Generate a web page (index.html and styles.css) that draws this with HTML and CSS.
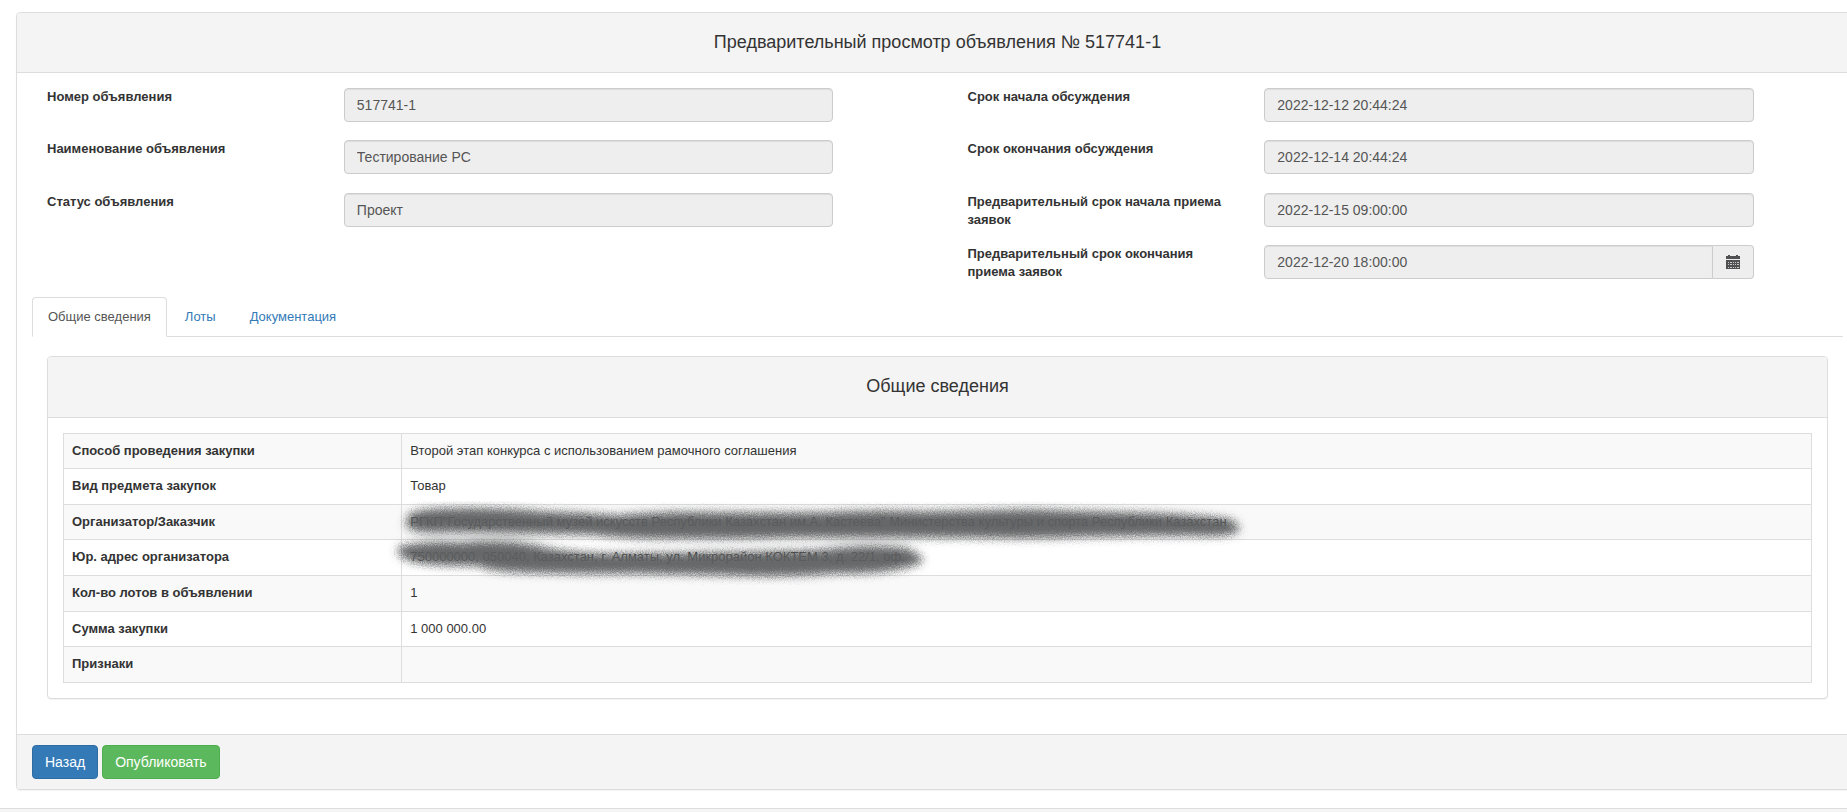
FILE: index.html
```html
<!DOCTYPE html>
<html lang="ru">
<head>
<meta charset="utf-8">
<title>Предварительный просмотр объявления № 517741-1</title>
<link rel="stylesheet" href="styles.css">
</head>
<body>
<main class="page">
  <section class="panel">
    <header class="panel-heading"><h1 class="panel-title">Предварительный просмотр объявления № 517741-1</h1></header>
    <form class="details">
      <div class="details-column">
        <div class="field"><label class="field-label" for="number">Номер объявления</label><div class="field-control"><input class="input" id="number" type="text" value="517741-1" readonly></div></div>
        <div class="field"><label class="field-label" for="name">Наименование объявления</label><div class="field-control"><input class="input" id="name" type="text" value="Тестирование РС" readonly></div></div>
        <div class="field"><label class="field-label" for="status">Статус объявления</label><div class="field-control"><input class="input" id="status" type="text" value="Проект" readonly></div></div>
      </div>
      <div class="details-column">
        <div class="field"><label class="field-label" for="discuss-start">Срок начала обсуждения</label><div class="field-control"><input class="input" id="discuss-start" type="text" value="2022-12-12 20:44:24" readonly></div></div>
        <div class="field"><label class="field-label" for="discuss-end">Срок окончания обсуждения</label><div class="field-control"><input class="input" id="discuss-end" type="text" value="2022-12-14 20:44:24" readonly></div></div>
        <div class="field"><label class="field-label" for="bids-start">Предварительный срок начала приема заявок</label><div class="field-control"><input class="input" id="bids-start" type="text" value="2022-12-15 09:00:00" readonly></div></div>
        <div class="field"><label class="field-label" for="bids-end">Предварительный срок окончания приема заявок</label>
          <div class="field-control">
            <input class="input input-joined" id="bids-end" type="text" value="2022-12-20 18:00:00" readonly>
            <button class="addon" type="button" aria-label="Выбрать дату">
              <svg width="14" height="14" viewBox="0 0 14 14" shape-rendering="crispEdges" aria-hidden="true">
                <path fill="#505052" d="M2 0h2v1h6V0h2v1h2v3H0V1h2zM0 5h14v9H0z"/>
                <path fill="#c8c8c8" d="M2 7h1v1H2zM4 7h2v1H4zM7 7h1v1H7zM9 7h1v1H9zM11 7h2v1h-2zM2 9h1v1H2zM4 9h2v1H4zM7 9h1v1H7zM9 9h1v1H9zM11 9h2v1h-2zM2 12h1v1H2zM4 12h2v1H4zM7 12h1v1H7zM9 12h1v1H9zM11 12h2v1h-2z"/>
              </svg>
            </button>
          </div>
        </div>
      </div>
    </form>
    <div class="panel-content">
      <nav class="tabs">
        <a class="tab tab-active" href="#general">Общие сведения</a>
        <a class="tab" href="#lots">Лоты</a>
        <a class="tab" href="#docs">Документация</a>
      </nav>
      <section class="panel panel-inner" id="general">
        <header class="panel-heading"><h2 class="panel-title">Общие сведения</h2></header>
        <div class="panel-body">
          <table class="table">
            <tbody>
              <tr><th scope="row">Способ проведения закупки</th><td>Второй этап конкурса с использованием рамочного соглашения</td></tr>
              <tr><th scope="row">Вид предмета закупок</th><td>Товар</td></tr>
              <tr><th scope="row">Организатор/Заказчик</th><td class="redacted">РГКП"Государственный музей искусств Республики Казахстан им.А. Кастеева" Министерства культуры и спорта Республики Казахстан
                <svg class="brush" width="880" height="84" viewBox="0 0 880 84" aria-hidden="true">
                  <defs>
                    <filter id="spray" x="0" y="0" width="880" height="84" filterUnits="userSpaceOnUse">
                      <feGaussianBlur stdDeviation="5 4" result="soft"/>
                      <feTurbulence type="fractalNoise" baseFrequency="0.9" numOctaves="2" seed="4" result="noise"/>
                      <feDisplacementMap in="soft" in2="noise" scale="8" xChannelSelector="R" yChannelSelector="G"/>
                    </filter>
                  </defs>
                  <g filter="url(#spray)" fill="#5c5e60" fill-opacity="0.94" stroke="#5c5e60" stroke-opacity="0.5" stroke-width="2">
                    <path d="M22 13Q34 8 64 8Q114 7 154 11Q194 12 229 15Q274 10 334 12L434 12Q484 9 534 11L644 9Q694 11 744 12Q794 13 839 18Q856 24 848 31Q839 36 804 34L704 35Q644 38 584 36L404 36Q344 38 294 37Q244 38 204 33L134 32Q74 30 44 31Q24 31 18 24Z"/>
                    <path d="M12 46Q34 40 74 42Q114 38 149 45Q174 52 224 53L304 52Q384 51 434 49Q479 43 516 47Q538 55 532 62Q504 73 444 72Q404 76 344 74L244 72Q194 73 134 71Q99 70 89 64Q44 65 24 60Q6 54 12 46Z"/>
                  </g>
                </svg></td></tr>
              <tr><th scope="row">Юр. адрес организатора</th><td>750000000, 050040, Казахстан, г. Алматы, ул. Микрорайон КОКТЕМ 3, д. 22/1, оф.</td></tr>
              <tr><th scope="row">Кол-во лотов в объявлении</th><td>1</td></tr>
              <tr><th scope="row">Сумма закупки</th><td>1 000 000.00</td></tr>
              <tr><th scope="row">Признаки</th><td></td></tr>
            </tbody>
          </table>
        </div>
      </section>
    </div>
    <footer class="panel-footer">
      <button class="button button-primary" type="button">Назад</button>
      <button class="button button-success" type="button">Опубликовать</button>
    </footer>
  </section>
</main>
<div class="page-footer"></div>
</body>
</html>
```

FILE: styles.css
```css
* { box-sizing: border-box; }

body {
  margin: 0;
  min-height: 100vh;
  display: flex;
  flex-direction: column;
  overflow-x: hidden;
  background: #fff;
  color: #333;
  font-family: "Liberation Sans", Arial, sans-serif;
  font-size: 13px;
  line-height: 1.43;
}

/* The outer panel runs past the right edge of the window. */
.page { margin: 12px -12px 18px 16px; }

.panel {
  border: 1px solid #ddd;
  border-radius: 4px;
  background: #fff;
  box-shadow: 0 1px 1px rgba(0, 0, 0, 0.05);
}

.panel-heading {
  padding: 19px 15px 20px;
  border-bottom: 1px solid #ddd;
  border-radius: 3px 3px 0 0;
  background: #f4f4f4;
}

.panel-title {
  margin: 0;
  font-size: 18px;
  font-weight: 400;
  line-height: 20px;
  text-align: center;
}

.details {
  display: grid;
  grid-template-columns: 1fr 1fr;
  padding: 15px 0 14px;
}

.details-column {
  display: flex;
  flex-direction: column;
  gap: 15px;
  padding: 0 15px;
}

.field {
  display: grid;
  grid-template-columns: 4fr 7fr 1fr;
}

.field-label {
  min-height: 2.88em;
  padding: 0 15px;
  font-weight: 700;
  line-height: 18px;
}

.field-control {
  display: flex;
  align-items: flex-start;
  padding: 0 15px;
}

.input {
  flex: 1;
  min-width: 0;
  height: 34px;
  padding: 6px 12px;
  border: 1px solid #ccc;
  border-radius: 4px;
  background: #eee;
  box-shadow: inset 0 1px 1px rgba(0, 0, 0, 0.075);
  color: #555;
  font: inherit;
  font-size: 14px;
}

.input-joined { border-radius: 4px 0 0 4px; }

.addon {
  display: flex;
  align-items: center;
  justify-content: center;
  width: 41px;
  height: 34px;
  padding: 0;
  border: 1px solid #ccc;
  border-left: 0;
  border-radius: 0 4px 4px 0;
  background: #eee;
}

.panel-content { padding: 0 15px 15px; }

.tabs {
  display: flex;
  gap: 2px;
  border-bottom: 1px solid #ddd;
}

.tab {
  margin-bottom: -1px;
  padding: 10px 15px;
  border: 1px solid transparent;
  border-radius: 4px 4px 0 0;
  color: #337ab7;
  line-height: 18px;
  text-decoration: none;
}

.tab-active {
  border-color: #ddd #ddd #fff;
  background: #fff;
  color: #555;
}

.panel-inner { margin: 19px 15px 20px; }

.panel-inner .panel-heading { padding-bottom: 21px; }

.panel-body { padding: 15px; }

.table {
  width: 100%;
  border: 1px solid #ddd;
  border-collapse: collapse;
}

.table th,
.table td {
  padding: 8px;
  border: 1px solid #ddd;
  text-align: left;
  vertical-align: top;
}

.table th { width: 19.35%; }

.table tr:nth-child(odd) { background: #f9f9f9; }

.redacted { position: relative; }

.brush {
  position: absolute;
  top: -4px;
  left: -14px;
  z-index: 1;
  pointer-events: none;
}

.panel-footer {
  display: flex;
  gap: 4px;
  padding: 10px 15px;
  border-top: 1px solid #ddd;
  border-radius: 0 0 3px 3px;
  background: #f4f4f4;
}

.button {
  padding: 6px 12px;
  border: 1px solid;
  border-radius: 4px;
  color: #fff;
  font: inherit;
  font-size: 14px;
  line-height: 20px;
}

.button-primary { border-color: #2e6da4; background: #337ab7; }

.button-success { border-color: #4cae4c; background: #5cb85c; }

.page-footer {
  flex: 1;
  border-top: 1px solid #ddd;
  background: #f5f5f5;
}
```
